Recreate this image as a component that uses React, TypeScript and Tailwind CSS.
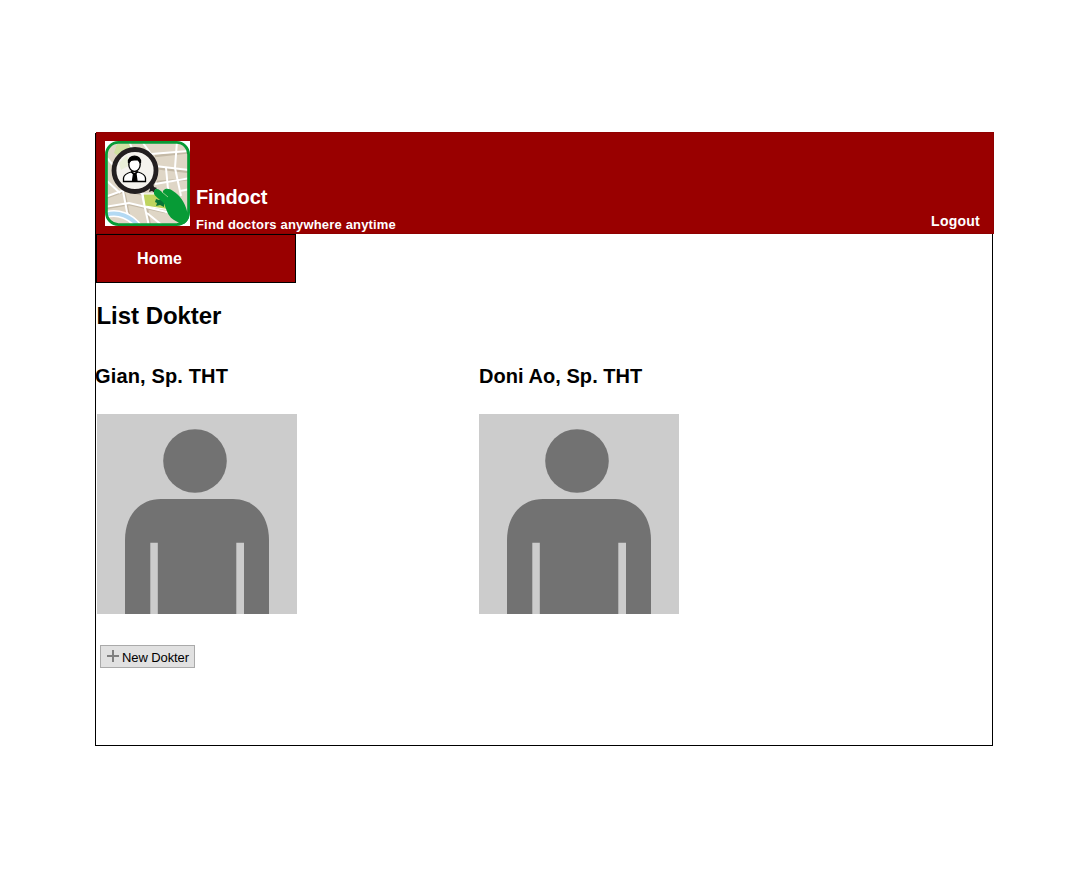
function Logo() {
  return (
    <svg className="block h-[85px] w-[85px] shrink-0" viewBox="0 0 85 85">
      <defs>
        <clipPath id="card">
          <rect x="1" y="1" width="83" height="83" rx="12" />
        </clipPath>
      </defs>
      <rect width="85" height="85" fill="#fff" />
      <g clipPath="url(#card)">
        <rect width="85" height="85" fill="#dfd6c6" />
        <path d="M12 3H25L29 14L18 18L9 12Z" fill="#cfe0a0" />
        <g fill="none" stroke="#c4b9a6" strokeWidth="2.6">
          <path d="M0 57L22 49L39 54M0 67L24 63L60 71" />
          <path d="M15 40L20 55L23 71L28 85M37 52L42 68L45 85" />
          <path d="M50 15L85 11M50 27L85 31M52 41L85 38" />
        </g>
        <g fill="none" stroke="#fff" strokeWidth="2">
          <path d="M2 17L14 31L19 55L22 71L27 85" />
          <path d="M24 0L32 20L38 58L44 85" />
          <path d="M38 2L46 13L85 10" />
          <path d="M50 25L85 29" />
          <path d="M72 0L70 27L76 55" />
          <path d="M61 27L63 48" />
          <path d="M0 56L22 48L39 53" />
          <path d="M50 43L85 37" />
          <path d="M75 50L85 48" />
          <path d="M0 66L24 62L66 72" />
          <path d="M42 72L58 85" />
          <path d="M2 40L15 52" />
        </g>
        <path d="M38 53H60L66 69L40 65Z" fill="#bfd45f" stroke="#fff" strokeWidth="1.2" />
        <path d="M0 74C13 70 26 75 34 86" fill="none" stroke="#fff" strokeWidth="7" />
        <path d="M0 74C13 70 26 75 34 86" fill="none" stroke="#b3d9f3" strokeWidth="4" />
      </g>
      <rect x="1.4" y="1.4" width="82.2" height="82.2" rx="12" fill="none" stroke="#079b36" strokeWidth="2.8" />
      <path d="M43 44L48 42L49 46L52 47L50 49L50 52L47 50L44 51L45 48Z" fill="#231f20" />
      <circle cx="30" cy="29.5" r="21" fill="#f5f3ee" stroke="#231f20" strokeWidth="4.8" />
      <path d="M14 22L22 14L25 24L16 29Z" fill="#eaf0d8" />
      <g stroke="#000" strokeWidth="1.3">
        <path d="M18.5 40.5V37Q19 33 26 31L29 33L33 31Q40 33 40.5 37V40.5Z" fill="#fff" />
        <ellipse cx="29.5" cy="23.5" rx="5.7" ry="7" fill="#fff" />
        <path d="M23.5 21.5C22.5 13 36.5 13 35.5 21.5C34 21 33.5 18.5 32 18.5L27 19.2C25 19.5 25 21 23.5 21.5Z" fill="#000" />
        <path d="M26.5 30L29.5 34L32.5 30" fill="none" />
        <path d="M28.5 33H31L32 40H27.5Z" fill="#000" />
      </g>
      <path d="M50 61L51 58L54 59L56 58L59 61V66L55 64L51 65L52 62Z" fill="#087536" />
      <path d="M49 50C51 46 55 49 58 52C57 48 63 46 68 50C75 54 80 62 82 70L84 74Q84 80 79 83Q73 82 69 79C64 76 62 71 60 65C59 60 52 58 49 53Z" fill="#079b36" />
      <path d="M57 51L63 56" fill="none" stroke="#b4d9a0" strokeWidth="0.8" />
    </svg>
  );
}

function Portrait() {
  return (
    <svg className="block h-[200px] w-[200px]" viewBox="0 0 200 200">
      <rect width="200" height="200" fill="#ccc" />
      <circle cx="98" cy="47" r="31.8" fill="#727272" />
      <path d="M28 200V126C28 101 43 85 64 85H136C157 85 172 101 172 126V200Z" fill="#727272" />
      <path d="M53.3 128.7H60.8V200H53.3ZM139.3 128.7H147V200H139.3Z" fill="#ccc" />
    </svg>
  );
}

export default function App() {
  return (
    <div className="h-[871px] w-[1091px] overflow-hidden bg-white pt-[133px] pl-[95px] font-['Liberation_Sans',sans-serif] text-black">
      <div className="flow-root h-[613px] w-[898px] border-x border-b border-black">
        <header className="-mt-px flex h-[102px] w-[898px] border border-[#8f0000] bg-[#990000] pt-2 pr-[13px] pl-2 font-bold text-white">
          <Logo />
          <div className="ml-1.5 flex grow flex-col pt-[44px]">
            <h1 className="text-[20px] leading-[24px] tracking-[-0.15px] whitespace-nowrap">Findoct</h1>
            <p className="mt-[8px] text-[13px] leading-[16px] tracking-[0.17px] whitespace-nowrap">Find doctors anywhere anytime</p>
          </div>
          <a className="mt-[71px] text-[14px] leading-[18px] tracking-[0.25px]">Logout</a>
        </header>
        <nav className="flex h-[49px] w-[200px] items-center border border-black bg-[#990000] pl-10 text-[16px] font-bold tracking-[0.15px] text-white">Home</nav>
        <main>
          <h2 className="mt-[18px] ml-[0.5px] text-[24px] leading-[30px] font-bold tracking-[-0.04px]">List Dokter</h2>
          <div className="mt-[33px] flex">
            <section className="w-[383px]">
              <h3 className="-ml-px text-[20px] leading-[24px] font-bold tracking-[0.15px]">Gian, Sp. THT</h3>
              <div className="mt-[26px] ml-px"><Portrait /></div>
            </section>
            <section>
              <h3 className="text-[20px] leading-[24px] font-bold tracking-[0.05px]">Doni Ao, Sp. THT</h3>
              <div className="mt-[26px]"><Portrait /></div>
            </section>
          </div>
          <button className="mt-[31px] ml-1 flex h-[23px] w-[95px] items-center border border-[#aaa] bg-[#e1e1e1] pl-1.5 text-[13px] tracking-[-0.1px] whitespace-nowrap">
            <svg className="mr-[3px] mb-px h-3 w-3 shrink-0" viewBox="0 0 12 12">
              <path d="M0 6H12M6 0V12" stroke="#808080" strokeWidth="2" />
            </svg>
            <span className="pt-[3px] leading-[18px]">New Dokter</span>
          </button>
        </main>
      </div>
    </div>
  );
}
